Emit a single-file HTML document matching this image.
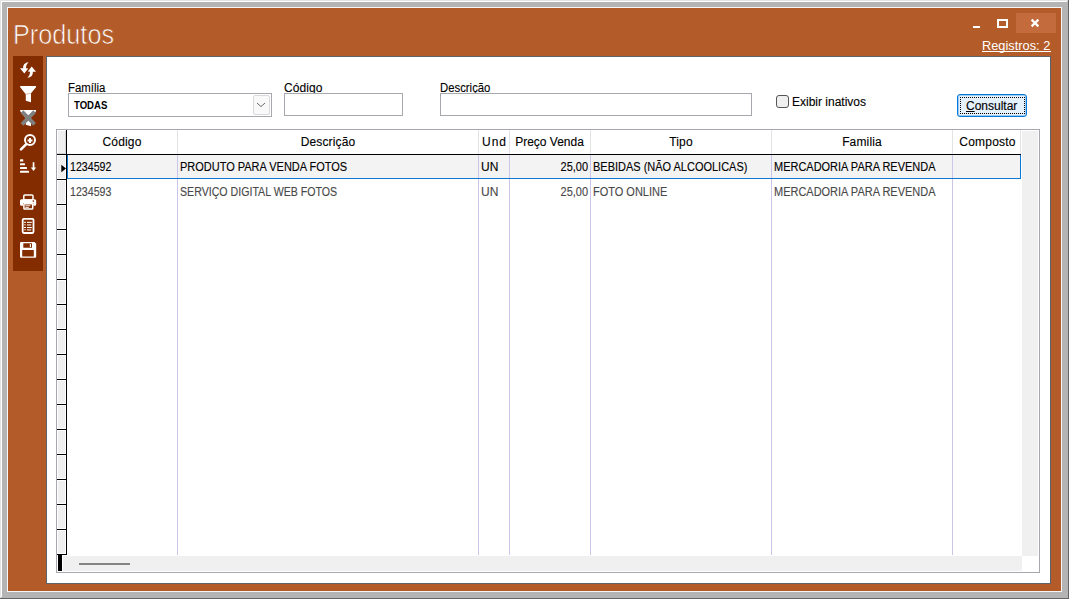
<!DOCTYPE html>
<html><head><meta charset="utf-8">
<style>
*{margin:0;padding:0;box-sizing:border-box}
html,body{width:1069px;height:599px;overflow:hidden;background:#b4b4b4;font-family:"Liberation Sans",sans-serif}
.a{position:absolute}
.t{position:absolute;white-space:nowrap;line-height:1;-webkit-text-stroke:0.12px currentColor}
.hd,.hd2{font-size:12px;color:#000;text-align:center}
.hd{letter-spacing:0.15px;padding-left:1px}
.cl{font-size:12px;color:#000;transform:scaleX(0.915);transform-origin:0 0}
.cl.rt{transform-origin:100% 0}
.cl.nd{transform:scaleX(0.885)}
.cl.un{transform:none}
.r2{color:#484848}
.rhc{position:absolute;left:57px;width:9px;height:25px;border-top:1px solid #fff;border-left:1px solid #fff;border-right:1px solid #fff;border-bottom:1px solid #000;background:#efefef}
</style></head><body>
<!-- window frame -->
<div class="a" style="left:0;top:0;width:1068px;height:1px;background:#e3e3e3"></div>
<div class="a" style="left:0;top:0;width:1px;height:598px;background:#e3e3e3"></div>
<div class="a" style="left:1px;top:1px;width:1066px;height:1px;background:#fff"></div>
<div class="a" style="left:1px;top:1px;width:1px;height:596px;background:#fff"></div>
<div class="a" style="left:1068px;top:0;width:1px;height:599px;background:#646464"></div>
<div class="a" style="left:0;top:598px;width:1069px;height:1px;background:#646464"></div>
<div class="a" style="left:7px;top:7px;width:1055px;height:585px;background:#f4f6f8"></div>
<div class="a" style="left:8px;top:8px;width:1053px;height:583px;background:#b35c2a"></div>

<!-- title -->
<div class="t" style="left:13px;top:22px;font-size:27px;transform:scaleX(0.935);transform-origin:0 0;color:#fff;-webkit-text-stroke:0.7px #b35c2a">Produtos</div>

<!-- window buttons -->
<div class="a" style="left:973px;top:26px;width:7px;height:2px;background:#fff"></div>
<div class="a" style="left:997px;top:19px;width:11px;height:9px;border:2px solid #fff"></div>
<div class="a" style="left:1016px;top:13px;width:40px;height:20px;background:#c46b3d"></div>
<svg class="a" style="left:1030px;top:18px" width="10" height="10" viewBox="0 0 10 10"><path d="M1.6 1.6L8.4 8.4M8.4 1.6L1.6 8.4" stroke="#fff" stroke-width="2.2"/></svg>

<!-- Registros -->
<div class="t" style="left:982px;top:40px;font-size:12.8px;color:#fff;-webkit-text-stroke:0">Registros: 2</div><div class="a" style="left:982px;top:51px;width:69px;height:1px;background:#fff"></div>

<!-- toolbar -->
<div class="a" style="left:13px;top:56px;width:30px;height:215px;background:#832c00"></div>
<svg class="a" style="left:13px;top:56px" width="30" height="215" viewBox="13 56 30 215">
<g fill="#fff">
<path d="M28.6 62.2C25 62.5 22.8 64.8 23.2 68.2L20 68.2L24.3 73.5L28.2 68.5L26 68.2C26 66 26.5 64 28.6 62.2Z"/>
<path d="M27.4 77.8C31 77.5 33.2 75.2 32.8 71.8L36 71.8L31.7 66.5L27.8 71.5L30 71.8C30 74 29.5 76 27.4 77.8Z"/>
<path d="M20.2 86L36 86L36 87.3L31 93.3L31 102.3L25.8 100.7L25.8 94.2L20.2 87.3Z"/>
<path d="M20.2 110L36 110L36 111.3L31 117.3L31 126.3L25.8 124.7L25.8 118.2L20.2 111.3Z"/>
</g>
<path d="M25.6 94.3L30.8 93.3" stroke="#c08a70" stroke-width="0.6"/>
<path d="M22 111.6L34.6 124.4M34.6 111.6L22 124.4" stroke="#808080" stroke-width="3.7"/>
<g stroke="#fff" fill="none">
<circle cx="30" cy="140" r="5" stroke-width="2"/>
<path d="M27.5 140.5H32.5M30 138V143" stroke-width="2"/>
<path d="M26 144.3L21 149.3" stroke-width="2.6" stroke-linecap="round"/>
</g>
<g fill="#fff">
<rect x="20" y="159.3" width="3.3" height="2.2" rx="0.6"/>
<rect x="20" y="163.2" width="5" height="2.1" rx="0.6"/>
<rect x="20" y="167.1" width="7" height="2" rx="0.6"/>
<rect x="20" y="170.7" width="9" height="2.1" rx="0.6"/>
<rect x="32.7" y="162.2" width="1.7" height="6"/>
<path d="M30.8 167.6H36.1L33.5 170.9Z"/>
</g>
<g fill="none" stroke="#fff">
<rect x="23.8" y="194.9" width="9.2" height="5" rx="1" stroke-width="1.5"/>
<rect x="23.9" y="203.7" width="8.8" height="5.4" rx="0.6" stroke-width="1.5"/>
<rect x="22.7" y="218.9" width="10.8" height="14.1" rx="1.2" stroke-width="1.8"/>
</g>
<path fill="#fff" d="M21.5 199.2H34.7A1.5 1.5 0 0 1 36.2 200.7V204.3A1.5 1.5 0 0 1 34.7 205.8H33.3V203H23.2V205.8H21.5A1.5 1.5 0 0 1 20 204.3V200.7A1.5 1.5 0 0 1 21.5 199.2Z"/>
<circle cx="33.3" cy="201.1" r="0.8" fill="#832c00"/>
<g fill="#fff">
<rect x="25.3" y="205.3" width="5" height="0.9"/>
<rect x="25.3" y="206.9" width="3.5" height="0.9"/>
<rect x="24" y="221.8" width="2" height="1"/><rect x="27" y="221.8" width="4.8" height="1.1"/>
<rect x="24" y="224.3" width="2" height="1" opacity="0.7"/><rect x="27" y="224.2" width="4.2" height="1.4" opacity="0.75"/>
<rect x="24" y="227" width="2" height="1"/><rect x="27" y="227" width="4.8" height="1.1"/>
<rect x="24" y="229.3" width="2" height="1" opacity="0.7"/><rect x="27" y="229.2" width="4.2" height="1.4" opacity="0.75"/>
</g>
<path fill="#fff" fill-rule="evenodd" d="M21 242H34.5L36.2 243.8V256.8A1 1 0 0 1 35.2 257.8H21A1 1 0 0 1 20 256.8V243A1 1 0 0 1 21 242ZM23.3 243.2V247.8H32V243.2ZM22.2 250.1V256.6H33.8V250.1Z"/>
<rect x="29.8" y="244" width="1.2" height="3" fill="#fff"/>
</svg>

<!-- panel -->
<div class="a" style="left:46px;top:56px;width:1005px;height:528px;background:#fff;border:1px solid #5a646a"></div>

<!-- form -->
<div class="t" style="left:68px;top:82px;font-size:12px;transform:scaleX(0.95);transform-origin:0 0;color:#000">Família</div>
<div class="a" style="left:68px;top:93px;width:204px;height:24px;border:1px solid #a6a8ad;background:#fff"></div>
<div class="t" style="left:74px;top:100px;font-size:11px;font-weight:bold;transform:scaleX(0.87);transform-origin:0 0;-webkit-text-stroke:0;color:#000">TODAS</div>
<div class="a" style="left:253px;top:95px;width:17px;height:20px;border:1px solid #dadada;border-radius:2px;background:#f9f9f9"></div>
<svg class="a" style="left:256px;top:102px" width="10" height="6" viewBox="0 0 10 6"><path d="M1 1L5 4.6L9 1" stroke="#5a5a5a" stroke-width="0.9" fill="none"/></svg>

<div class="t" style="left:284px;top:82px;font-size:12px;letter-spacing:0.1px;color:#000">Código</div>
<div class="a" style="left:284px;top:93px;width:119px;height:23px;border:1px solid #a6a8ad;background:#fff"></div>

<div class="t" style="left:440px;top:82px;font-size:12px;transform:scaleX(0.945);transform-origin:0 0;color:#000">Descrição</div>
<div class="a" style="left:440px;top:93px;width:312px;height:23px;border:1px solid #a6a8ad;background:#fff"></div>

<div class="a" style="left:776px;top:95px;width:13px;height:13px;border:1px solid #555;border-radius:3px;background:#f0f0f0"></div>
<div class="t" style="left:792px;top:96px;font-size:12px;color:#000">Exibir inativos</div>

<div class="a" style="left:957px;top:94px;width:70px;height:23px;border:1px solid #0078d7;border-radius:3px;background:#e5f1fb;box-shadow:inset 0 0 0 1px #9fcbf0"></div>
<div class="a" style="left:960px;top:97px;width:65px;height:17px;border:1px dotted #000"></div>
<div class="t" style="left:966px;top:100px;font-size:12px;color:#000"><u>C</u>onsultar</div>

<!-- grid -->
<div class="a" style="left:56px;top:129px;width:984px;height:444px;border:1px solid #a6a8ad;background:#fff"></div>
<!-- row header column -->
<div class="a" style="left:57px;top:130px;width:9px;height:24px;background:#fff"></div>
<div class="a" style="left:58px;top:131px;width:7px;height:22px;background:#efefef"></div>
<div class="a" style="left:65px;top:131px;width:1px;height:23px;background:#d5d5d5"></div>
<div class="a" style="left:57px;top:153px;width:9px;height:1px;background:#d5d5d5"></div>
<div class="a" style="left:57px;top:155px;width:9px;height:24px;background:#fff"></div><div class="a" style="left:58px;top:156px;width:7px;height:22px;background:#efefef"></div><div class="a" style="left:57px;top:179px;width:9px;height:1px;background:#000"></div>
<div class="a" style="left:57px;top:180px;width:9px;height:24px;background:#fff"></div><div class="a" style="left:58px;top:181px;width:7px;height:22px;background:#efefef"></div><div class="a" style="left:57px;top:204px;width:9px;height:1px;background:#000"></div>
<div class="a" style="left:57px;top:205px;width:9px;height:24px;background:#fff"></div><div class="a" style="left:58px;top:206px;width:7px;height:22px;background:#efefef"></div><div class="a" style="left:57px;top:229px;width:9px;height:1px;background:#000"></div>
<div class="a" style="left:57px;top:230px;width:9px;height:24px;background:#fff"></div><div class="a" style="left:58px;top:231px;width:7px;height:22px;background:#efefef"></div><div class="a" style="left:57px;top:254px;width:9px;height:1px;background:#000"></div>
<div class="a" style="left:57px;top:255px;width:9px;height:24px;background:#fff"></div><div class="a" style="left:58px;top:256px;width:7px;height:22px;background:#efefef"></div><div class="a" style="left:57px;top:279px;width:9px;height:1px;background:#000"></div>
<div class="a" style="left:57px;top:280px;width:9px;height:24px;background:#fff"></div><div class="a" style="left:58px;top:281px;width:7px;height:22px;background:#efefef"></div><div class="a" style="left:57px;top:304px;width:9px;height:1px;background:#000"></div>
<div class="a" style="left:57px;top:305px;width:9px;height:24px;background:#fff"></div><div class="a" style="left:58px;top:306px;width:7px;height:22px;background:#efefef"></div><div class="a" style="left:57px;top:329px;width:9px;height:1px;background:#000"></div>
<div class="a" style="left:57px;top:330px;width:9px;height:24px;background:#fff"></div><div class="a" style="left:58px;top:331px;width:7px;height:22px;background:#efefef"></div><div class="a" style="left:57px;top:354px;width:9px;height:1px;background:#000"></div>
<div class="a" style="left:57px;top:355px;width:9px;height:24px;background:#fff"></div><div class="a" style="left:58px;top:356px;width:7px;height:22px;background:#efefef"></div><div class="a" style="left:57px;top:379px;width:9px;height:1px;background:#000"></div>
<div class="a" style="left:57px;top:380px;width:9px;height:24px;background:#fff"></div><div class="a" style="left:58px;top:381px;width:7px;height:22px;background:#efefef"></div><div class="a" style="left:57px;top:404px;width:9px;height:1px;background:#000"></div>
<div class="a" style="left:57px;top:405px;width:9px;height:24px;background:#fff"></div><div class="a" style="left:58px;top:406px;width:7px;height:22px;background:#efefef"></div><div class="a" style="left:57px;top:429px;width:9px;height:1px;background:#000"></div>
<div class="a" style="left:57px;top:430px;width:9px;height:24px;background:#fff"></div><div class="a" style="left:58px;top:431px;width:7px;height:22px;background:#efefef"></div><div class="a" style="left:57px;top:454px;width:9px;height:1px;background:#000"></div>
<div class="a" style="left:57px;top:455px;width:9px;height:24px;background:#fff"></div><div class="a" style="left:58px;top:456px;width:7px;height:22px;background:#efefef"></div><div class="a" style="left:57px;top:479px;width:9px;height:1px;background:#000"></div>
<div class="a" style="left:57px;top:480px;width:9px;height:24px;background:#fff"></div><div class="a" style="left:58px;top:481px;width:7px;height:22px;background:#efefef"></div><div class="a" style="left:57px;top:504px;width:9px;height:1px;background:#000"></div>
<div class="a" style="left:57px;top:505px;width:9px;height:24px;background:#fff"></div><div class="a" style="left:58px;top:506px;width:7px;height:22px;background:#efefef"></div><div class="a" style="left:57px;top:529px;width:9px;height:1px;background:#000"></div>
<div class="a" style="left:57px;top:530px;width:9px;height:24px;background:#fff"></div><div class="a" style="left:58px;top:531px;width:7px;height:22px;background:#efefef"></div><div class="a" style="left:57px;top:554px;width:9px;height:1px;background:#000"></div>
<div class="a" style="left:66px;top:130px;width:1px;height:425px;background:#000"></div>
<div class="a" style="left:57px;top:154px;width:964px;height:1px;background:#000"></div>
<!-- header separators -->
<div class="a" style="left:177px;top:130px;width:1px;height:24px;background:#e3e3e3"></div>
<div class="a" style="left:478px;top:130px;width:1px;height:24px;background:#e3e3e3"></div>
<div class="a" style="left:509px;top:130px;width:1px;height:24px;background:#e3e3e3"></div>
<div class="a" style="left:590px;top:130px;width:1px;height:24px;background:#e3e3e3"></div>
<div class="a" style="left:771px;top:130px;width:1px;height:24px;background:#e3e3e3"></div>
<div class="a" style="left:952px;top:130px;width:1px;height:24px;background:#e3e3e3"></div>
<div class="a" style="left:1020px;top:130px;width:1px;height:24px;background:#e3e3e3"></div>
<!-- data separators -->
<div class="a" style="left:177px;top:155px;width:1px;height:400px;background:#c9c6ea"></div>
<div class="a" style="left:478px;top:155px;width:1px;height:400px;background:#c9c6ea"></div>
<div class="a" style="left:509px;top:155px;width:1px;height:400px;background:#c9c6ea"></div>
<div class="a" style="left:590px;top:155px;width:1px;height:400px;background:#c9c6ea"></div>
<div class="a" style="left:771px;top:155px;width:1px;height:400px;background:#c9c6ea"></div>
<div class="a" style="left:952px;top:155px;width:1px;height:400px;background:#c9c6ea"></div>
<!-- selected row -->
<div class="a" style="left:67px;top:155px;width:954px;height:24px;background:#f3f3f3;border-left:1px solid #0b78d4;border-right:1px solid #0b78d4;border-bottom:1px solid #0b78d4"></div>
<div class="a" style="left:177px;top:155px;width:1px;height:23px;background:#c9c6ea"></div>
<div class="a" style="left:478px;top:155px;width:1px;height:23px;background:#c9c6ea"></div>
<div class="a" style="left:509px;top:155px;width:1px;height:23px;background:#c9c6ea"></div>
<div class="a" style="left:590px;top:155px;width:1px;height:23px;background:#c9c6ea"></div>
<div class="a" style="left:771px;top:155px;width:1px;height:23px;background:#c9c6ea"></div>
<div class="a" style="left:952px;top:155px;width:1px;height:23px;background:#c9c6ea"></div>
<svg class="a" style="left:60px;top:164px" width="7" height="9" viewBox="0 0 7 9"><path d="M1.3 0.7L6 4.5L1.3 8.3Z" fill="#000"/></svg>
<!-- scrollbars -->
<div class="a" style="left:1022px;top:131px;width:16px;height:425px;background:#f0f0f0"></div>
<div class="a" style="left:63px;top:556px;width:959px;height:15px;background:#f0f0f0"></div>
<div class="a" style="left:58px;top:555px;width:4px;height:16px;background:#000"></div>
<div class="a" style="left:79px;top:563px;width:51px;height:2px;background:#858585"></div>
<!-- header text -->
<div class="t hd" style="left:66px;width:111px;top:136px">Código</div>
<div class="t hd" style="left:177px;width:301px;top:136px">Descrição</div>
<div class="t hd2" style="left:479px;width:31px;top:136px;letter-spacing:1px">Und</div>
<div class="t hd2" style="left:509px;width:81px;top:136px">Preço Venda</div>
<div class="t hd" style="left:590px;width:181px;top:136px">Tipo</div>
<div class="t hd" style="left:771px;width:181px;top:136px">Familia</div>
<div class="t hd" style="left:952px;width:70px;top:136px;letter-spacing:0.2px">Composto</div>
<!-- rows -->
<div class="t cl nd" style="left:70px;top:161px">1234592</div>
<div class="t cl" style="left:180px;top:161px">PRODUTO PARA VENDA FOTOS</div>
<div class="t cl un" style="left:481px;top:161px">UN</div>
<div class="t cl rt" style="left:509px;width:79px;text-align:right;top:161px">25,00</div>
<div class="t cl" style="left:593px;top:161px">BEBIDAS (NÃO ALCOOLICAS)</div>
<div class="t cl" style="left:774px;top:161px">MERCADORIA PARA REVENDA</div>
<div class="t cl r2 nd" style="left:70px;top:186px">1234593</div>
<div class="t cl r2 nd" style="left:180px;top:186px">SERVIÇO DIGITAL WEB FOTOS</div>
<div class="t cl r2 un" style="left:481px;top:186px">UN</div>
<div class="t cl r2 rt" style="left:509px;width:79px;text-align:right;top:186px">25,00</div>
<div class="t cl r2" style="left:593px;top:186px">FOTO ONLINE</div>
<div class="t cl r2" style="left:774px;top:186px">MERCADORIA PARA REVENDA</div>
</body></html>
